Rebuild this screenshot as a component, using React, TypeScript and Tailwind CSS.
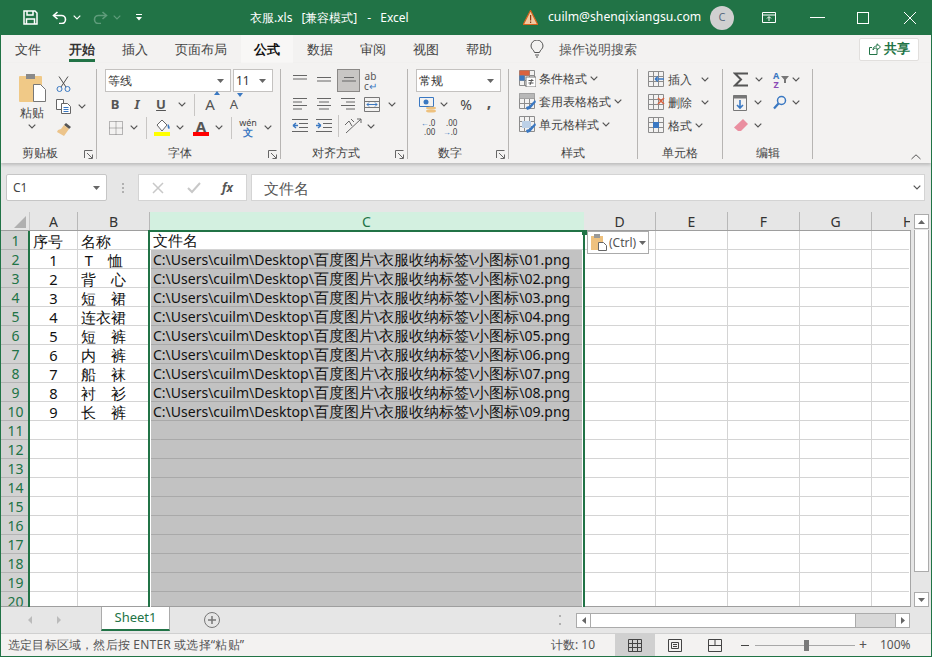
import React from "react";

const Chev = ({ c = "#555", className = "" }: { c?: string; className?: string }) => (
  <svg width="8" height="5" viewBox="0 0 8 5" className={`shrink-0 ${className}`} fill="none"><path d="M.7.7 4 4l3.3-3.3" stroke={c} strokeWidth="1.2" /></svg>
);
const Tri = () => <svg width="7" height="4" viewBox="0 0 7 4"><path d="M0 0h7L3.500 4z" fill="#666" /></svg>;
const Launch = () => (
  <svg width="10" height="10" viewBox="0 0 10 10" fill="none" stroke="#666"><path d="M.5 8V.5h8" /><path d="M3 3l5 5M8.500 4.500v4h-4" /></svg>
);
const Lines = ({ w }: { w: [number, number][] }) => (
  <svg width="16" height="14" viewBox="0 0 16 14" stroke="#666" fill="none">
    {w.map(([a, b], i) => <path key={i} d={`M${a} ${1.5 + i * 3.5}H${b}`} />)}
  </svg>
);
const Box = ({ w, children }: { w: string; children?: React.ReactNode }) => (
  <div className={`${w} shrink-0 flex items-center justify-center`}>{children}</div>
);

function TitleBar() {
  return (
    <div className="h-[35px] bg-[#217346] flex items-center text-white text-[12px] shrink-0">
      <div className="w-[23px]" />
      <svg width="15" height="15" viewBox="0 0 15 15" fill="none" stroke="#fff" strokeWidth="1.5"><path d="M1 1h11l2 2v11H1z" /><path d="M4 1v4h6V1" /><path d="M3.500 14V9h8v5" /></svg>
      <div className="w-[14px]" />
      <svg width="16" height="13" viewBox="0 0 16 13" fill="none" stroke="#fff" strokeWidth="1.6"><path d="M5.500 1 1.500 4.500 5.500 8" /><path d="M2 4.500h7.500a4 4 0 0 1 0 8H7" /></svg>
      <Chev c="#fff" className="ml-[5px]" />
      <svg width="16" height="13" viewBox="0 0 16 13" fill="none" stroke="#5f9c7b" strokeWidth="1.6" className="ml-[11px]"><path d="M10.500 1l4 3.500-4 3.500" /><path d="M14 4.500H6.500a4 4 0 0 0 0 8H9" /></svg>
      <Chev c="#5f9c7b" className="ml-[5px]" />
      <svg width="6" height="7" viewBox="0 0 6 7" fill="#fff" className="ml-[15px]"><path d="M0 0h6v1H0zM0 3h6L3 6.500z" /></svg>
      <div className="w-[108px]" />
      <div className="w-[273px] flex">
        <span>衣服.xls</span>
        <span className="ml-[9px]">[兼容模式]</span>
        <span className="ml-[10px]">-</span>
        <span className="ml-[9px]">Excel</span>
      </div>
      <svg width="15" height="15" viewBox="0 0 15 15"><path d="M7.500 .5 14.700 14.500H.3z" fill="#f3c9a0" stroke="#d9641e" strokeWidth="1.200" /><path d="M7 5h1.200v5.500H7zM7 11.500h1.200v1.500H7z" fill="#8a3a10" /></svg>
      <span className="ml-[10px] text-[12.2px] w-[162px]">cuilm@shenqixiangsu.com</span>
      <div className="w-[24px] h-[24px] rounded-full bg-[#d0d0d0] flex items-center justify-center text-[#5b6b80] text-[11px]">C</div>
      <svg width="14" height="11" viewBox="0 0 14 11" fill="none" stroke="#fff" className="ml-[28px]"><path d="M.5.5h13v10H.5zM.5 3h13M7 9V5M5 6.500 7 4.500l2 2" /></svg>
      <div className="ml-[34px] w-[15px] h-px bg-white" />
      <div className="ml-[32px] w-[12px] h-[12px] border border-white" />
      <svg width="14" height="14" viewBox="0 0 14 14" stroke="#fff" className="ml-[34px]"><path d="M1 1l12 12M13 1 1 13" /></svg>
    </div>
  );
}

function Tabs() {
  return (
    <div className="h-[28px] bg-[#f3f2f1] flex items-center text-[13px] text-[#444] pl-[14px] gap-[27px] shrink-0 relative">
      <span className="pt-[1px]">文件</span>
      <span className="relative ml-[1px] pt-[1px] font-bold text-[#333] h-full flex items-center">
        开始
        <span className="absolute left-0 right-0 bottom-[1px] h-[3px] bg-[#217346]" />
      </span>
      <span className="pt-[1px]">插入</span>
      <span className="pt-[1px]">页面布局</span>
      <span className="-mx-[13px] px-[13px] pt-[1px] bg-[#f8f7f6] h-full flex items-center font-bold text-[#111]">公式</span>
      <span className="pt-[1px]">数据</span>
      <span className="pt-[1px]">审阅</span>
      <span className="pt-[1px]">视图</span>
      <span className="pt-[1px]">帮助</span>
      <svg width="14" height="18" viewBox="0 0 14 18" fill="none" stroke="#555" className="ml-[11px]"><path d="M4.500 12.500C4 10 1 9 1 6a6 6 0 0 1 12 0c0 3-3 4-3.500 6.500zM5 15h4M6 17h2" /></svg>
      <span className="-ml-[12px] pt-[1px] text-[#555]">操作说明搜索</span>
      <div className="ml-auto mr-[12px] w-[60px] h-[23px] bg-white border border-[#e1dfdd] rounded-[2px] flex items-center justify-center gap-[3px] text-[#217346] font-bold">
        <svg width="12" height="12" viewBox="0 0 12 12" fill="none" stroke="#217346"><path d="M8 7v4.500H.5v-7H3M4 7c0-3 2-4 4-4V.8L11.500 4 8 7V5C6 5 5 5.500 4 7z" /></svg>
        共享
      </div>
    </div>
  );
}

const Group = ({ w, label, launch, children }: { w: string; label: string; launch?: boolean; children: React.ReactNode }) => (
  <div className={`${w} h-[90px] shrink-0 border-r border-[#b7b5b3] flex flex-col relative`}>
    <div className="h-[75px]">{children}</div>
    <div className={`h-[15px] pt-[2px] flex items-center justify-center text-[12px] text-[#444] leading-none ${launch ? "pr-[17px]" : ""}`}>{label}</div>
    {launch && <div className="absolute right-[2px] -bottom-[1px]"><Launch /></div>}
  </div>
);
const Sel = ({ w, t }: { w: string; t: string }) => (
  <div className={`${w} h-[23px] bg-white border border-[#c4c2c0] flex items-center justify-between pl-[2px] pr-[6px] text-[12px] text-[#333]`}>
    <span>{t}</span>
    <Tri />
  </div>
);
const Sep = () => <div className="w-px h-[22px] bg-[#c8c6c4] shrink-0" />;
const StyleRow = ({ icon, t, w = "", chev }: { icon: React.ReactNode; t: string; w?: string; chev?: boolean }) => (
  <div className="h-[23px] flex items-center gap-[3px] text-[12px] text-[#444]">
    <Box w="w-[17px]">{icon}</Box>
    <span className={w}>{t}</span>
    {chev && <Chev />}
  </div>
);
const MiniGrid = ({ children }: { children?: React.ReactNode }) => (
  <svg width="17" height="17" viewBox="0 0 17 17" fill="none">
    <path d="M.5.5h15v15H.5zM.5 5.500h15M.5 10.500h15M5.500.5v15M10.500.5v15" stroke="#8c8c8c" />
    {children}
  </svg>
);

function Ribbon() {
  return (
    <div className="h-[100px] bg-[#f3f2f1] flex pt-[6px] shrink-0 shadow-[0_2px_3px_rgba(0,0,0,0.18)] relative z-10">
      <Group w="w-[96px]" label="剪贴板" launch>
        <div className="flex">
          <div className="ml-[16px] w-[30px] flex flex-col items-center pt-[4px]">
            <svg width="29" height="29" viewBox="0 0 29 29">
              <rect x="1" y="3" width="23" height="26" rx="1" fill="#f0c987" />
              <rect x="8" y="1" width="9" height="5" fill="#8a8a8a" />
              <path d="M15.500 11.500h7l5 5v12h-12z" fill="#fff" stroke="#777" />
            </svg>
            <span className="text-[12px] text-[#444] mt-[3px] leading-[15px]">粘贴</span>
            <Chev className="mt-[4px]" />
          </div>
          <div className="ml-[9px] flex flex-col pt-[3px]">
            <div className="h-[23px] flex items-center">
              <svg width="15" height="16" viewBox="0 0 15 16" fill="none" stroke="#4d4d4d"><path d="M3 .5 10 11M12 .5 5 11" /><circle cx="3.500" cy="13" r="2.500" stroke="#3a78c2" /><circle cx="11.500" cy="13" r="2.500" stroke="#3a78c2" /></svg>
            </div>
            <div className="h-[23px] flex items-center gap-[7px]">
              <svg width="15" height="15" viewBox="0 0 15 15" fill="#fff" stroke="#666"><path d="M.5.5h7v10h-7z" /><path d="M5.500 4.500h6l3 3v7h-9z" /><path d="M7.500 8.500h5M7.500 10.500h5M7.500 12.500h5" stroke="#3a78c2" /></svg>
              <Chev />
            </div>
            <div className="h-[23px] flex items-center">
              <svg width="16" height="15" viewBox="0 0 16 15"><path d="M10 1l5 4-2 2-5-4z" fill="#555" /><path d="M8 3l5 4-5 7-7-4 1-2 3-1z" fill="#ecc48a" /></svg>
            </div>
          </div>
        </div>
      </Group>

      <Group w="w-[184px]" label="字体" launch>
        <div className="flex flex-col pl-[8px]">
          <div className="flex gap-[2px]">
            <Sel w="w-[126px]" t="等线" />
            <Sel w="w-[40px]" t="11" />
          </div>
          <div className="h-[23px] mt-[1px] flex items-center text-[#555] text-[13px]">
            <Box w="w-[20px]"><b className="[font-family:'Liberation_Sans',sans-serif]">B</b></Box>
            <Box w="w-[24px]"><i className="font-bold [font-family:'Liberation_Serif',serif]">I</i></Box>
            <Box w="w-[24px]"><u className="font-bold [font-family:'Liberation_Sans',sans-serif]">U</u></Box>
            <Box w="w-[18px]"><Chev /></Box>
            <div className="w-[3px]" /><Sep />
            <Box w="w-[30px]">
              <span className="relative text-[15px] [font-family:'Liberation_Sans',sans-serif]">A<span className="absolute -top-[2px] -right-[5px] w-0 h-0 border-x-[3px] border-b-[4px] border-x-transparent border-b-[#3a78c2]" /></span>
            </Box>
            <Box w="w-[18px]">
              <span className="relative text-[13px] [font-family:'Liberation_Sans',sans-serif]">A<span className="absolute -top-[2px] -right-[5px] w-0 h-0 border-x-[3px] border-t-[4px] border-x-transparent border-t-[#3a78c2]" /></span>
            </Box>
          </div>
          <div className="h-[23px] flex items-center">
            <Box w="w-[22px]">
              <svg width="14" height="14" viewBox="0 0 14 14" fill="none" stroke="#777" strokeDasharray="1 1"><path d="M.5.5h13v13H.5zM.5 7h13M7 .5v13" /></svg>
            </Box>
            <Box w="w-[14px]"><Chev /></Box>
            <Box w="w-[5px]" /><Sep />
            <Box w="w-[30px]">
              <svg width="17" height="17" viewBox="0 0 17 17"><path d="M3 6 8 1l5 5-5 6z" fill="#fff" stroke="#666" /><path d="M14 5c2 2 2 5 1 5s-2-3-1-5z" fill="#3a78c2" /><rect x="0" y="13" width="16" height="4" fill="#ffff00" /></svg>
            </Box>
            <Box w="w-[6px]"><Chev /></Box>
            <Box w="w-[36px]">
              <div className="flex flex-col items-center">
                <span className="text-[15px] leading-[12px] font-bold text-[#555] [font-family:'Liberation_Sans',sans-serif]">A</span>
                <span className="w-[16px] h-[4px] bg-[#ff0000]" />
              </div>
            </Box>
            <Box w="w-[0px]"><Chev /></Box>
            <Box w="w-[12px]" /><Sep />
            <Box w="w-[32px]">
              <div className="flex flex-col items-center leading-none text-[9px] text-[#444]">
                <span>wén</span>
                <span className="text-[#3a78c2] text-[10px] font-bold">文</span>
              </div>
            </Box>
            <Chev />
          </div>
        </div>
      </Group>

      <Group w="w-[127px]" label="对齐方式" launch>
        <div className="flex flex-col pl-[11px]">
          <div className="h-[23px] flex items-center">
            <Box w="w-[16px]"><Lines w={[[1, 15], [1, 15]]} /></Box>
            <Box w="w-[8px]" />
            <Box w="w-[16px]"><div className="pt-[5px]"><Lines w={[[1, 15], [1, 15]]} /></div></Box>
            <div className="ml-[5px] w-[23px] h-[23px] bg-[#c8c6c4] border border-[#8a8886] flex items-end justify-center pb-[1px]"><Lines w={[[3, 13], [1, 15]]} /></div>
            <div className="ml-[4px] flex flex-col items-center leading-[10px] text-[10px] text-[#555] [font-family:'Liberation_Sans',sans-serif]">
              <span>ab</span><span>c<span className="text-[#3a78c2]">↵</span></span>
            </div>
          </div>
          <div className="h-[22px] mt-[1px] flex items-center">
            <Box w="w-[16px]"><Lines w={[[1, 15], [1, 10], [1, 15], [1, 10]]} /></Box>
            <Box w="w-[8px]" />
            <Box w="w-[16px]"><Lines w={[[1, 15], [3, 13], [1, 15], [3, 13]]} /></Box>
            <Box w="w-[8px]" />
            <Box w="w-[16px]"><Lines w={[[1, 15], [6, 15], [1, 15], [6, 15]]} /></Box>
            <Box w="w-[8px]" />
            <Box w="w-[16px]">
              <svg width="16" height="15" viewBox="0 0 16 15" fill="none"><path d="M.5.5h15v14H.5zM.5 4.500h15M.5 10.500h15" stroke="#777" /><path d="M3 7.500h10M3 7.500l2-2M3 7.500l2 2M13 7.500l-2-2M13 7.500l-2 2" stroke="#3a78c2" /></svg>
            </Box>
            <Box w="w-[8px]" />
            <Chev />
          </div>
          <div className="h-[22px] flex items-center">
            <Box w="w-[16px]">
              <svg width="16" height="14" viewBox="0 0 16 14" fill="none"><path d="M0 .5h16M7 4.500h9M7 8.500h9M0 12.500h16" stroke="#666" /><path d="M6 6.500H1M1 6.500l3-2.500M1 6.500l3 2.500" stroke="#3a78c2" strokeWidth="1.400" /></svg>
            </Box>
            <Box w="w-[8px]" />
            <Box w="w-[16px]">
              <svg width="16" height="14" viewBox="0 0 16 14" fill="none"><path d="M0 .5h16M7 4.500h9M7 8.500h9M0 12.500h16" stroke="#666" /><path d="M0 6.500h5M5 6.500 2 4M5 6.500 2 9" stroke="#3a78c2" strokeWidth="1.400" /></svg>
            </Box>
            <Box w="w-[6px]" /><Sep />
            <Box w="w-[28px]">
              <svg width="18" height="16" viewBox="0 0 18 16" fill="none" stroke="#666"><path d="M2 15 17 1M13 1h4v4" /><path d="M1 7l4-4 3 5M7 1l3 3" /></svg>
            </Box>
            <Chev />
          </div>
        </div>
      </Group>

      <Group w="w-[101px]" label="数字" launch>
        <div className="flex flex-col pl-[8px]">
          <Sel w="w-[85px]" t="常规" />
          <div className="h-[23px] mt-[1px] flex items-center text-[#555]">
            <Box w="w-[24px]">
              <svg width="18" height="18" viewBox="0 0 18 18" fill="none"><path d="M.5 1.500h14v9H.5z" stroke="#3a78c2" /><circle cx="7" cy="6" r="2.500" fill="#3a78c2" /><ellipse cx="12" cy="12" rx="5" ry="1.500" fill="#eec17e" /><ellipse cx="12" cy="15" rx="5" ry="1.500" fill="#eec17e" /></svg>
            </Box>
            <Box w="w-[8px]"><Chev /></Box>
            <Box w="w-[36px]"><span className="text-[14px] text-[#444]">%</span></Box>
            <Box w="w-[10px]"><span className="text-[16px] font-bold leading-none pb-[6px]">,</span></Box>
          </div>
          <div className="h-[22px] flex items-center text-[8px] leading-[9px] text-[#444]">
            <Box w="w-[24px]"><div className="flex flex-col items-end"><span><span className="text-[#3a78c2]">←</span>.0</span><span>.00</span></div></Box>
            <Box w="w-[20px]"><div className="flex flex-col items-end"><span>.00</span><span><span className="text-[#3a78c2]">→</span>.0</span></div></Box>
          </div>
        </div>
      </Group>

      <Group w="w-[129px]" label="样式">
        <div className="pl-[10px] -mt-[2px]">
          <StyleRow chev t="条件格式" icon={<MiniGrid><path d="M.5.5h10v5H.5z" fill="#d9623f" /><path d="M.5 5.500h5v5h-5z" fill="#3a78c2" /><rect x="7" y="7" width="10" height="10" fill="#fff" stroke="#777" /><path d="M9.500 10.500h5M9.500 13h5M13 9l-2 6" stroke="#555" /></MiniGrid>} />
          <StyleRow chev t="套用表格格式" icon={<MiniGrid><path d="M.5.5h15v5H.5z" fill="#b8b8b8" /><path d="M16 7 10 13l-3 1 1 3 3-1 6-7z" fill="#3a78c2" /></MiniGrid>} />
          <StyleRow chev t="单元格样式" icon={<MiniGrid><path d="M3 5h9v7H3z" fill="#bcd0e6" /><path d="M16 7 10 13l-3 1 1 3 3-1 6-7z" fill="#3a78c2" /></MiniGrid>} />
        </div>
      </Group>

      <Group w="w-[85px]" label="单元格">
        <div className="pl-[10px] -mt-[1px]">
          <StyleRow chev t="插入" w="w-[30px]" icon={<MiniGrid><path d="M7 8h9M7 8l3-2.500M7 8l3 2.500" stroke="#3a78c2" strokeWidth="1.500" /></MiniGrid>} />
          <StyleRow chev t="删除" w="w-[30px]" icon={<MiniGrid><path d="M10 4l6 6M16 4l-6 6" stroke="#d9623f" strokeWidth="1.500" /></MiniGrid>} />
          <StyleRow chev t="格式" w="w-[24px]" icon={<MiniGrid><rect x="5" y="5" width="6" height="6" fill="#3a78c2" /></MiniGrid>} />
        </div>
      </Group>

      <Group w="w-[90px]" label="编辑">
        <div className="pl-[10px] -mt-[1px] flex flex-col">
          <div className="h-[23px] flex items-center">
            <svg width="16" height="15" viewBox="0 0 16 15" fill="none" stroke="#555" strokeWidth="2"><path d="M15 1.500H2l6 6-6 6h13" /></svg>
            <Chev className="ml-[6px]" />
            <span className="ml-[10px] flex flex-col items-center leading-[9px] text-[9px] font-bold [font-family:'Liberation_Sans',sans-serif]">
              <span className="text-[#3a78c2]">A</span><span className="text-[#8a4bb5]">Z</span>
            </span>
            <svg width="8" height="7" viewBox="0 0 8 7" className="ml-[2px]"><path d="M0 0h8L5 3.500V7H3V3.500z" fill="#777" /></svg>
            <Chev className="ml-[3px]" />
          </div>
          <div className="h-[23px] flex items-center">
            <svg width="15" height="16" viewBox="0 0 15 16" fill="none"><path d="M.5.5h13v15H.5z" stroke="#777" /><path d="M.5.5h13v3H.5z" fill="#777" /><path d="M7 5v8M4 10l3 3 3-3" stroke="#3a78c2" strokeWidth="1.600" /></svg>
            <Chev className="ml-[6px]" />
            <svg width="14" height="15" viewBox="0 0 14 15" fill="none" stroke="#3a78c2" strokeWidth="1.500" className="ml-[11px]"><circle cx="8.500" cy="5.500" r="4" /><path d="M5.500 8.500 1 13.500" strokeWidth="2.200" /></svg>
            <Chev className="ml-[5px]" />
          </div>
          <div className="h-[23px] flex items-center">
            <svg width="14" height="13" viewBox="0 0 14 13" className="ml-[1px]"><path d="M9 0l5 5-7 7H4L0 8.500z" fill="#ea8fa0" /></svg>
            <Chev className="ml-[6px]" />
          </div>
        </div>
      </Group>

      <div className="flex-1 relative">
        <svg width="10" height="6" viewBox="0 0 10 6" fill="none" stroke="#555" className="absolute right-[10px] bottom-[3px]"><path d="M.5 5 5 .8 9.500 5" /></svg>
      </div>
    </div>
  );
}

function FormulaBar() {
  return (
    <div className="h-[49px] bg-[#e6e6e6] flex pt-[11px] pl-[5px] shrink-0 text-[#444]">
      <div className="w-[101px] h-[27px] bg-white border border-[#c6c6c6] rounded-[2px] flex items-center justify-between pl-[6px] pr-[6px] text-[12px]">
        <span>C1</span><Tri />
      </div>
      <div className="w-[31px] h-[27px] flex items-center justify-center">
        <span className="w-[2px] h-[10px] border-y-[2px] border-[#b0b0b0] relative after:content-[''] after:absolute after:left-0 after:top-[2px] after:w-[2px] after:h-[2px] after:bg-[#b0b0b0]" />
      </div>
      <div className="w-[109px] h-[27px] bg-white border border-[#d4d4d4] flex items-center pl-[13px]">
        <svg width="12" height="12" viewBox="0 0 12 12" stroke="#c8c8c8" strokeWidth="1.500"><path d="M1 1l10 10M11 1 1 11" /></svg>
        <svg width="14" height="12" viewBox="0 0 14 12" fill="none" stroke="#c8c8c8" strokeWidth="2" className="ml-[23px]"><path d="M1 6l4 4 8-9" /></svg>
        <span className="ml-[21px] text-[12px] font-bold italic text-[#555] [font-family:'Liberation_Serif',serif]">fx</span>
      </div>
      <div className="w-[674px] ml-[4px] h-[27px] bg-white border border-[#d4d4d4] flex items-center justify-between pl-[12px] pr-[3px] text-[14.67px] text-[#555]">
        <span>文件名</span>
        <Chev />
      </div>
    </div>
  );
}

const cols = [
  { l: "A", w: "w-[48px]" },
  { l: "B", w: "w-[72px]" },
  { l: "C", w: "w-[434px]" },
  { l: "D", w: "w-[72px]" },
  { l: "E", w: "w-[72px]" },
  { l: "F", w: "w-[72px]" },
  { l: "G", w: "w-[72px]" },
];
const names = ["\u00a0T\u3000恤", "背　心", "短　裙", "连衣裙", "短　裤", "内　裤", "船　袜", "衬　衫", "长　裤"];
const rows = Array.from({ length: 20 }, (_, i) => i + 1);

const Zh = ({ children }: { children: React.ReactNode }) => <span className="text-[15px]">{children}</span>;

function Sheet() {
  return (
    <div className="flex-1 flex min-h-0">
      <div className="w-[910px] flex flex-col relative overflow-hidden [font-family:'Liberation_Sans','Noto_Sans_CJK_SC',sans-serif]">
        <div className="h-[19px] flex bg-[#e6e6e6] border-b border-[#9e9e9e] shrink-0">
          <div className="w-[29px] flex items-end justify-end pr-[3px] pb-[2px] border-r border-[#c8c8c8]">
            <svg width="12" height="12" viewBox="0 0 12 12"><path d="M12 0v12H0z" fill="#b0b0b0" /></svg>
          </div>
          {cols.map((c) => (
            <div key={c.l} className={`${c.w} shrink-0 flex items-center justify-center text-[14px] overflow-hidden border-r ${c.l === "C" ? "bg-[#d3f0e0] text-[#217346] border-[#d3f0e0]" : "text-[#333] border-[#b8b8b8]"}`}>
              {c.l}
            </div>
          ))}
          <div className="w-[38px] shrink-0 flex items-center pl-[31px] text-[14px] text-[#333] overflow-hidden">H</div>
        </div>
        <div className="flex-1 overflow-hidden bg-white text-[14.67px] text-[#111] border-b border-[#9e9e9e] border-r border-r-[#a6a6a6]">
          {rows.map((r) => (
            <div key={r} className="h-[19px] flex">
              <div className="w-[29px] shrink-0 bg-[#d2d2d2] border-b border-[#b4b4b4] pt-[1px] flex items-center justify-center text-[14px] text-[#217346]">{r}</div>
              <div className="w-[48px] shrink-0 border-r border-b border-[#d4d4d4] pt-[1px] flex items-center justify-center">
                {r === 1 ? <span className="w-full pl-[3px]">序号</span> : r <= 10 ? r - 1 : ""}
              </div>
              <div className="w-[72px] shrink-0 border-r border-b border-[#d4d4d4] pt-[1px] flex items-center pl-[3px]">
                {r === 1 ? "名称" : r <= 10 ? names[r - 2] : ""}
              </div>
              <div className={`w-[434px] shrink-0 flex items-center pl-[3px] pt-[1px] text-[14px] ${r === 1 ? "border-b border-[#d4d4d4]" : "bg-[#c2c2c2] border-b border-[#a9a9a9]"}`}>
                {r === 1 ? <Zh>文件名</Zh> : r <= 10 ? (
                  <span className="whitespace-pre">
                    C:\Users\cuilm\Desktop\<Zh>百度图片</Zh>\<Zh>衣服收纳标签</Zh>\<Zh>小图标</Zh>\0{r - 1}.png
                  </span>
                ) : null}
              </div>
              {[0, 1, 2, 3].map((k) => (
                <div key={k} className="w-[72px] shrink-0 border-r border-b border-[#d4d4d4]" />
              ))}
              <div className="w-[37px] shrink-0 border-b border-[#d4d4d4]" />
            </div>
          ))}
        </div>
        {/* selection outlines */}
        <div className="absolute left-[27px] top-[19px] bottom-0 w-[2px] bg-[#217346]" />
        <div className="absolute left-[147px] top-[18px] bottom-0 w-[2px] bg-[#217346]" />
        <div className="absolute left-[149px] top-[38px] bottom-0 w-px bg-white" />
        <div className="absolute left-[147px] top-[18px] w-[437px] h-[2px] bg-[#217346]" />
        <div className="absolute left-[582px] top-[18px] bottom-0 w-[2px] bg-[#217346]" />
        <div className="absolute left-[581px] top-[38px] bottom-0 w-px bg-white" />
        <div className="absolute left-[581px] top-[18px] w-[5px] h-[5px] bg-[#217346]" />
        {/* paste options */}
        <div className="absolute left-[586px] top-[19px] w-[62px] h-[23px] bg-white border border-[#ababab] flex items-center pl-[3px] text-[12px] text-[#555] [font-family:'Noto_Sans',sans-serif]">
          <svg width="16" height="17" viewBox="0 0 16 17"><rect x="0" y="2" width="12" height="14" fill="#eec17e" /><rect x="3" y="0" width="6" height="4" fill="#999" /><path d="M7.500 8.500h5l3 3v5h-8z" fill="#fff" stroke="#666" /></svg>
          <span className="ml-[2px]">(Ctrl)</span>
          <span className="ml-[3px]"><svg width="7" height="4" viewBox="0 0 7 4"><path d="M0 0h7L3.500 4z" fill="#666" /></svg></span>
        </div>
      </div>
      <div className="w-[20px] bg-[#e6e6e6] flex flex-col items-center pt-[2px]">
        <div className="w-[15px] h-[15px] bg-white border border-[#ababab] flex items-center justify-center"><svg width="7" height="4" viewBox="0 0 7 4"><path d="M3.500 0 7 4H0z" fill="#666" /></svg></div>
        <div className="w-[15px] h-[342px] mt-px bg-white border-x border-b border-[#ababab]" />
        <div className="w-[15px] h-[15px] mt-auto bg-white border border-[#ababab] flex items-center justify-center"><svg width="7" height="4" viewBox="0 0 7 4"><path d="M0 0h7L3.500 4z" fill="#666" /></svg></div>
      </div>
    </div>
  );
}

function SheetBar() {
  return (
    <div className="h-[27px] bg-[#e6e6e6] border-b border-[#d0d0d0] flex items-start shrink-0">
      <div className="w-[100px] h-[20px] flex items-center pl-[27px] gap-[25px] mt-[3px]">
        <svg width="4" height="8" viewBox="0 0 4 8"><path d="M4 0v8L0 4z" fill="#bbb" /></svg>
        <svg width="4" height="8" viewBox="0 0 4 8"><path d="M0 0v8l4-4z" fill="#bbb" /></svg>
      </div>
      <div className="w-[69px] h-[24px] bg-white border-x border-b-2 border-x-[#ababab] border-b-[#217346] flex items-center justify-center text-[#217346] text-[13px] [font-family:'Noto_Sans',sans-serif]">Sheet1</div>
      <svg width="16" height="16" viewBox="0 0 16 16" fill="none" stroke="#777" className="ml-[34px] mt-[5px]"><circle cx="8" cy="8" r="7.500" /><path d="M4 8h8M8 4v8" strokeWidth="1.500" /></svg>
      <div className="ml-[339px] mt-[8px] w-[2px] h-[10px] border-y-[2px] border-[#b0b0b0]" />
      <div className="ml-[15px] mt-[6px] w-[334px] h-[15px] bg-[#d8d8d8] border border-[#ababab] flex">
        <div className="w-[14px] bg-white border-r border-[#ababab] flex items-center justify-center"><svg width="4" height="7" viewBox="0 0 4 7"><path d="M4 0v7L0 3.500z" fill="#666" /></svg></div>
        <div className="w-[265px] bg-white border-r border-[#ababab]" />
        <div className="flex-1" />
        <div className="w-[14px] bg-white border-l border-[#ababab] flex items-center justify-center"><svg width="4" height="7" viewBox="0 0 4 7"><path d="M0 0v7l4-3.500z" fill="#666" /></svg></div>
      </div>
    </div>
  );
}

function StatusBar() {
  return (
    <div className="h-[22px] bg-[#f3f2f1] flex items-center text-[12px] text-[#555] shrink-0">
      <span className="w-[550px] pl-[7px] tracking-[.2px]">选定目标区域，然后按 ENTER 或选择“粘贴”</span>
      <span className="w-[64px] whitespace-pre">计数: 10</span>
      <div className="w-[40px] h-full bg-[#d0d0d0] flex items-center justify-center">
        <svg width="14" height="13" viewBox="0 0 14 13" fill="none" stroke="#444"><path d="M.5.5h13v12H.5zM.5 4.500h13M.5 8.500h13M4.500.5v12M9.500.5v12" /></svg>
      </div>
      <Box w="w-[40px]"><svg width="14" height="13" viewBox="0 0 14 13" fill="none" stroke="#444"><path d="M.5.5h13v12H.5zM3.500 3.500h7v6h-7zM5 5.500h4M5 7.500h4" /></svg></Box>
      <Box w="w-[40px]"><svg width="14" height="13" viewBox="0 0 14 13" fill="none" stroke="#444"><path d="M.5.5h13v12H.5zM.5 6.500h6.500V.5M7 6.500h6.500" /></svg></Box>
      <Box w="w-[20px]"><div className="w-[8px] h-px bg-[#444]" /></Box>
      <div className="w-[100px] h-[9px] flex items-center relative">
        <div className="w-full h-px bg-[#a8a8a8]" />
        <div className="absolute left-[49px] top-[-1px] w-[5px] h-[11px] bg-[#7a7a7a]" />
      </div>
      <Box w="w-[16px]"><span className="text-[14px] leading-none">+</span></Box>
      <span className="ml-[9px] [font-family:'Noto_Sans',sans-serif]">100%</span>
    </div>
  );
}

export default function App() {
  return (
    <div className="w-[932px] h-[657px] overflow-hidden bg-[#217346] flex flex-col border-x border-b border-[#217346] [font-family:'Noto_Sans','Noto_Sans_CJK_SC',sans-serif]">
      <div className="-mx-px"><TitleBar /></div>
      <Tabs />
      <Ribbon />
      <FormulaBar />
      <Sheet />
      <SheetBar />
      <StatusBar />
    </div>
  );
}
